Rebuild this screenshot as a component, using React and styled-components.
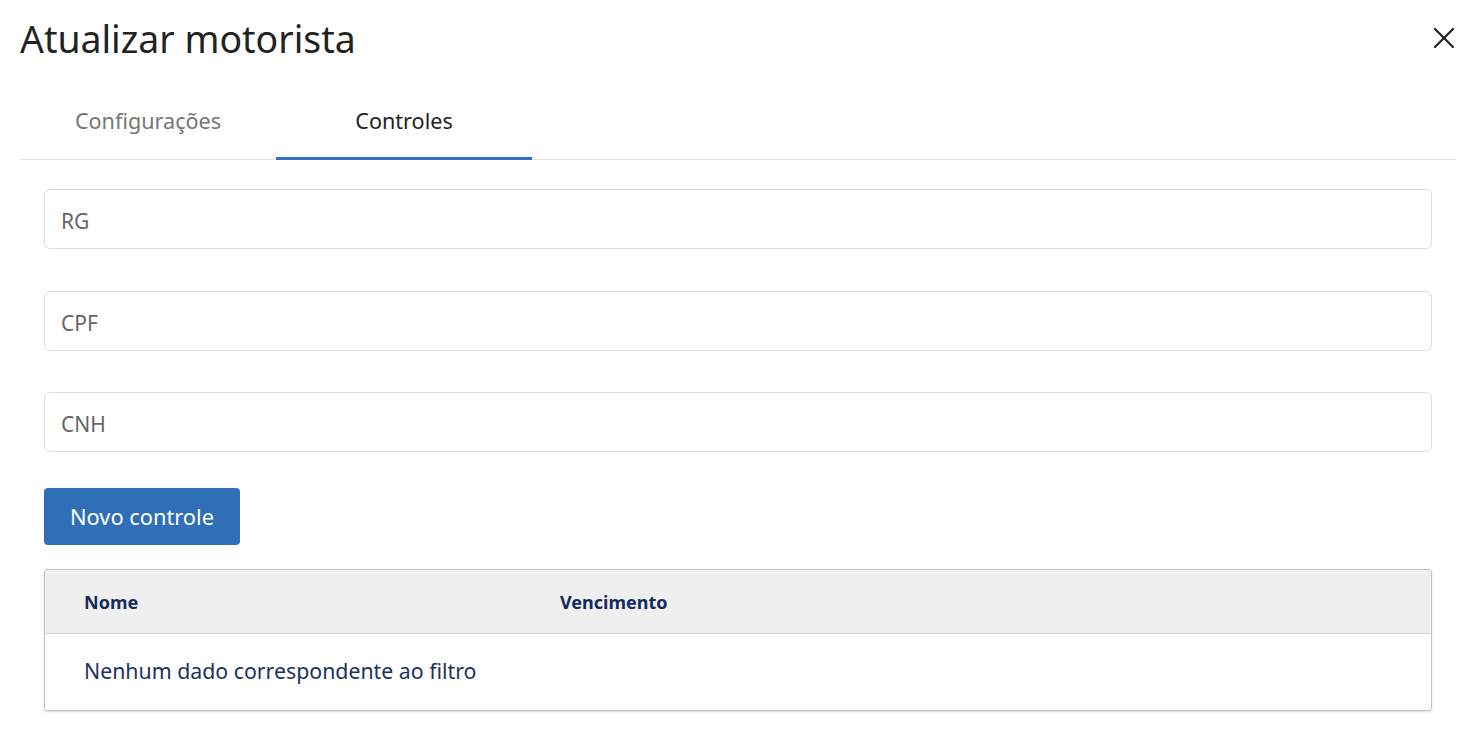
import React from "react";
import styled, { createGlobalStyle } from "styled-components";

const Global = createGlobalStyle`
  html, body { margin: 0; padding: 0; background: #fff; }
  body { font-family: "Noto Sans", "Open Sans", sans-serif; }
  * { box-sizing: border-box; }
`;

const Page = styled.div`
  width: 1468px;
  height: 756px;
  padding: 0 12px 0 20px;
  display: flex;
  flex-direction: column;
`;

const Header = styled.div`
  display: flex;
  align-items: center;
  justify-content: space-between;
  height: 80px;
  padding-bottom: 4px;
`;

const Title = styled.h1`
  margin: 0;
  font-size: 37.4px;
  font-weight: 400;
  color: #222;
`;

const Close = styled.button`
  border: none;
  background: none;
  padding: 0;
  width: 24px;
  height: 24px;
  display: flex;
  align-items: center;
  justify-content: center;
  cursor: pointer;
`;

const Tabs = styled.div`
  display: flex;
  border-bottom: 1px solid #e0e0e0;
  height: 80px;
`;

const Tab = styled.div`
  width: 256px;
  display: flex;
  align-items: center;
  justify-content: center;
  padding-top: 3px;
  font-size: 21.6px;
  color: ${(p) => (p.$active ? "#222" : "#767676")};
  border-bottom: 3px solid ${(p) => (p.$active ? "#3370c8" : "transparent")};
  margin-bottom: -1px;
`;

const Body = styled.div`
  padding: 29px 24px 0 24px;
  display: flex;
  flex-direction: column;
`;

const Field = styled.div`
  height: 60px;
  border: 1px solid #dcdcdc;
  border-radius: 6px;
  display: flex;
  align-items: center;
  padding: 3px 16px 0;
  font-size: 21px;
  color: #666;
  margin-bottom: ${(p) => p.$gap}px;
`;

const Button = styled.button`
  align-self: flex-start;
  width: 196px;
  height: 57px;
  background: #2f6fb7;
  color: #fff;
  border: none;
  border-radius: 4px;
  font-family: inherit;
  font-size: 21.8px;
  padding: 0;
  margin-bottom: 24px;
`;

const Table = styled.div`
  border: 1px solid #c4c4c4;
  border-radius: 3px;
  box-shadow: 0 1px 2px rgba(0,0,0,0.15);
  overflow: hidden;
`;

const HeadRow = styled.div`
  display: grid;
  grid-template-columns: 476px 1fr;
  height: 64px;
  align-items: center;
  background: #efefef;
  border-bottom: 1px solid #d6d6d6;
  padding-left: 39px;
`;

const HeadCell = styled.div`
  font-size: 18px;
  font-weight: 700;
  color: #142c5a;
`;

const EmptyRow = styled.div`
  height: 76px;
  display: flex;
  align-items: center;
  padding-left: 39px;
  padding-bottom: 3px;
  font-size: 21.3px;
  color: #1a3262;
`;

export default function App() {
  return (
    <>
      <Global />
      <Page>
        <Header>
          <Title>Atualizar motorista</Title>
          <Close aria-label="Fechar">
            <svg width="22" height="22" viewBox="0 0 22 22">
              <path d="M2 2 L20 20 M20 2 L2 20" stroke="#222" strokeWidth="2.2" strokeLinecap="round" />
            </svg>
          </Close>
        </Header>
        <Tabs>
          <Tab>Configurações</Tab>
          <Tab $active>Controles</Tab>
        </Tabs>
        <Body>
          <Field $gap={42}>RG</Field>
          <Field $gap={41}>CPF</Field>
          <Field $gap={36}>CNH</Field>
          <Button>Novo controle</Button>
          <Table>
            <HeadRow>
              <HeadCell>Nome</HeadCell>
              <HeadCell>Vencimento</HeadCell>
            </HeadRow>
            <EmptyRow>Nenhum dado correspondente ao filtro</EmptyRow>
          </Table>
        </Body>
      </Page>
    </>
  );
}
